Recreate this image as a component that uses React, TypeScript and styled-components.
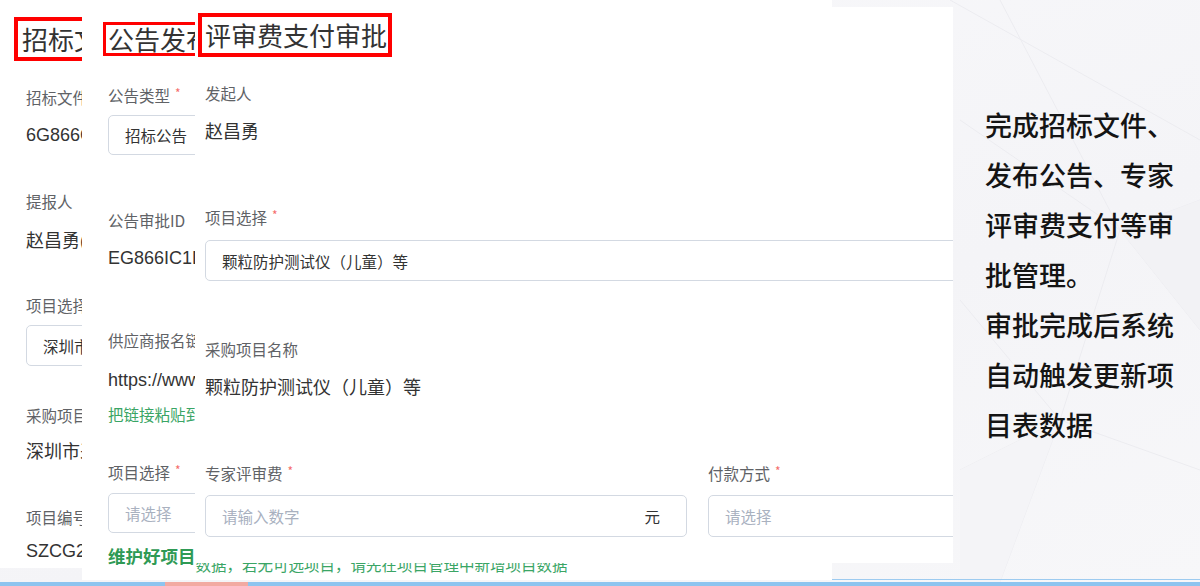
import React from "react";
import styled, { createGlobalStyle } from "styled-components";

const Global = createGlobalStyle`
  html, body { margin: 0; padding: 0; }
  body {
    width: 1200px;
    height: 586px;
    overflow: hidden;
    background: #f5f5f7;
    font-family: "Liberation Sans", "Noto Sans CJK SC", sans-serif;
  }
`;

const Page = styled.div`
  width: 1200px;
  height: 586px;
  display: flex;
  flex-direction: column;
`;

const Stage = styled.div`
  position: relative;
  height: 582px;
  display: flex;
  justify-content: flex-end;
  overflow: hidden;
  background: linear-gradient(160deg, #f9f9fb 0%, #f4f4f7 60%, #f7f7f9 100%);
`;

const Backdrop = styled.svg`
  position: absolute;
  inset: 0;
`;

const Caption = styled.div`
  position: relative;
  width: 215px;
  padding-top: 100px;
  font-family: "Noto Sans CJK SC", sans-serif;
  font-size: 27px;
  font-weight: 500;
  color: #141414;
`;

const CaptionLine = styled.div`
  height: 50px;
  line-height: 50px;
  white-space: nowrap;
`;

const Panel = styled.div<{ $left: number; $top: number; $w: number; $h: number; $pl: number }>`
  position: absolute;
  left: ${(p) => p.$left}px;
  top: ${(p) => p.$top}px;
  width: ${(p) => p.$w}px;
  height: ${(p) => p.$h}px;
  padding-left: ${(p) => p.$pl}px;
  box-sizing: border-box;
  background: #ffffff;
  overflow: hidden;
  display: flex;
  flex-direction: column;
  align-items: flex-start;
`;

const TitleBox = styled.div<{ $mt: number; $ml: number; $b: number; $lh: number; $pl: number }>`
  margin-top: ${(p) => p.$mt}px;
  margin-left: ${(p) => p.$ml}px;
  border: ${(p) => p.$b}px solid #ff0000;
  padding: 0 1px 0 ${(p) => p.$pl}px;
  font-family: "Noto Sans CJK SC", sans-serif;
  font-size: 26px;
  line-height: ${(p) => p.$lh}px;
  color: #333;
  white-space: nowrap;
`;

const Label = styled.div<{ $mt: number }>`
  margin-top: ${(p) => p.$mt}px;
  font-family: "Noto Sans CJK SC", sans-serif;
  font-size: 15.5px;
  line-height: 22px;
  height: 22px;
  color: #606266;
  white-space: nowrap;
`;

const Star = styled.span`
  color: #f56c6c;
  font-size: 12px;
  margin-left: 5px;
  vertical-align: top;
  position: relative;
  top: -2px;
`;

const Value = styled.div<{ $mt: number }>`
  margin-top: ${(p) => p.$mt}px;
  font-family: "Liberation Sans", "Noto Sans CJK SC", sans-serif;
  font-size: 18px;
  line-height: 24px;
  height: 24px;
  color: #333;
  white-space: nowrap;
`;

const Hint = styled.div<{ $mt: number }>`
  margin-top: ${(p) => p.$mt}px;
  font-family: "Noto Sans CJK SC", sans-serif;
  font-size: 15.5px;
  line-height: 22px;
  color: #3aa565;
  white-space: nowrap;
`;

const StrongHint = styled.div<{ $mt: number }>`
  margin-top: ${(p) => p.$mt}px;
  font-family: "Noto Sans CJK SC", sans-serif;
  line-height: 24px;
  color: #2f9a55;
  white-space: nowrap;
  b {
    font-size: 17.5px;
    font-weight: 700;
  }
  span {
    font-size: 15.5px;
    color: #3aa565;
    position: relative;
    top: 8px;
  }
`;

const Input = styled.div<{ $mt: number; $w: number; $h: number; $muted?: boolean }>`
  margin-top: ${(p) => p.$mt}px;
  width: ${(p) => p.$w}px;
  height: ${(p) => p.$h}px;
  flex-shrink: 0;
  box-sizing: border-box;
  border: 1px solid #d3d9e2;
  border-radius: 5px;
  padding: 0 16px;
  display: flex;
  align-items: center;
  justify-content: space-between;
  font-family: "Noto Sans CJK SC", sans-serif;
  font-size: 15.5px;
  color: ${(p) => (p.$muted ? "#a9b1bf" : "#333")};
  white-space: nowrap;
`;

const Suffix = styled.span`
  color: #333;
  margin-right: 10px;
`;

const Row = styled.div<{ $mt: number }>`
  margin-top: ${(p) => p.$mt}px;
  display: grid;
  grid-template-columns: 482px 482px;
  column-gap: 21px;
`;

const Col = styled.div`
  display: flex;
  flex-direction: column;
`;

const BottomBar = styled.div`
  height: 4px;
  background: #8dc4ef;
  display: flex;
`;

const BarMark = styled.div`
  margin-left: 165px;
  width: 83px;
  background: #f2aaa2;
`;

const ThinLine = styled.div`
  position: absolute;
  left: 832px;
  right: 0;
  bottom: 2px;
  height: 1px;
  background: #9dcbf0;
`;

export default function App() {
  return (
    <Page>
      <Global />
      <Stage>
        <Backdrop width="1200" height="582" viewBox="0 0 1200 582">
          <g stroke="#ececf0" strokeWidth="1" fill="none">
            <path d="M950 0 L1200 140" />
            <path d="M1000 0 L1120 230 L1200 200" />
            <path d="M960 120 L1120 230 L1060 420 L960 470" />
            <path d="M1060 420 L1200 470" />
            <path d="M1120 230 L1200 330" />
            <path d="M960 300 L1060 420" />
            <path d="M1060 420 L1000 582" />
          </g>
          <polygon points="1120,230 1200,200 1200,330" fill="#f2f2f5" />
          <polygon points="960,470 1060,420 1000,582 960,582" fill="#f4f4f7" />
        </Backdrop>
        <Caption>
          <CaptionLine>完成招标文件、</CaptionLine>
          <CaptionLine>发布公告、专家</CaptionLine>
          <CaptionLine>评审费支付等审</CaptionLine>
          <CaptionLine>批管理。</CaptionLine>
          <CaptionLine>审批完成后系统</CaptionLine>
          <CaptionLine>自动触发更新项</CaptionLine>
          <CaptionLine>目表数据</CaptionLine>
        </Caption>

        <Panel $left={0} $top={0} $w={82} $h={568} $pl={26}>
          <TitleBox $mt={17} $ml={-12} $b={4} $lh={36} $pl={4}>招标文件上传</TitleBox>
          <Label $mt={25}>招标文件ID</Label>
          <Value $mt={15}>6G866C1D2A</Value>
          <Label $mt={43}>提报人</Label>
          <Value $mt={17}>赵昌勇(zhaocy)</Value>
          <Label $mt={41}>项目选择</Label>
          <Input $mt={9} $w={300} $h={41}>深圳市采购项目</Input>
          <Label $mt={38}>采购项目名称</Label>
          <Value $mt={14}>深圳市采购项目</Value>
          <Label $mt={42}>项目编号</Label>
          <Value $mt={11}>SZCG2023</Value>
        </Panel>

        <Panel $left={82} $top={0} $w={750} $h={580} $pl={26}>
          <TitleBox $mt={22} $ml={-5} $b={3} $lh={28} $pl={2}>公告发布</TitleBox>
          <Label $mt={28}>
            公告类型<Star>*</Star>
          </Label>
          <Input $mt={9} $w={300} $h={40}>招标公告</Input>
          <Label $mt={54}>公告审批ID</Label>
          <Value $mt={15}>EG866IC1D2A</Value>
          <Label $mt={59}>供应商报名链接</Label>
          <Value $mt={17}>https://www.szcg.gov.cn</Value>
          <Hint $mt={11}>把链接粘贴到浏览器中打开</Hint>
          <Label $mt={36}>
            项目选择<Star>*</Star>
          </Label>
          <Input $mt={10} $w={300} $h={40} $muted>
            请选择
          </Input>
          <StrongHint $mt={11}>
            <b>维护好项目</b>
            <span>数据，若无可选项目，请先在项目管理中新增项目数据</span>
          </StrongHint>
        </Panel>

        <Panel $left={195} $top={7} $w={758} $h={556} $pl={10}>
          <TitleBox $mt={6} $ml={-7} $b={4} $lh={36} $pl={3}>评审费支付审批</TitleBox>
          <Label $mt={25}>发起人</Label>
          <Value $mt={16}>赵昌勇</Value>
          <Label $mt={62}>
            项目选择<Star>*</Star>
          </Label>
          <Input $mt={12} $w={900} $h={41}>颗粒防护测试仪（儿童）等</Input>
          <Label $mt={57}>采购项目名称</Label>
          <Value $mt={16}>颗粒防护测试仪（儿童）等</Value>
          <Row $mt={62}>
            <Col>
              <Label $mt={0}>
                专家评审费<Star>*</Star>
              </Label>
              <Input $mt={11} $w={482} $h={42} $muted>
                请输入数字<Suffix>元</Suffix>
              </Input>
            </Col>
            <Col>
              <Label $mt={0}>
                付款方式<Star>*</Star>
              </Label>
              <Input $mt={11} $w={482} $h={42} $muted>
                请选择
              </Input>
            </Col>
          </Row>
        </Panel>
        <ThinLine />
      </Stage>
      <BottomBar>
        <BarMark />
      </BottomBar>
    </Page>
  );
}
